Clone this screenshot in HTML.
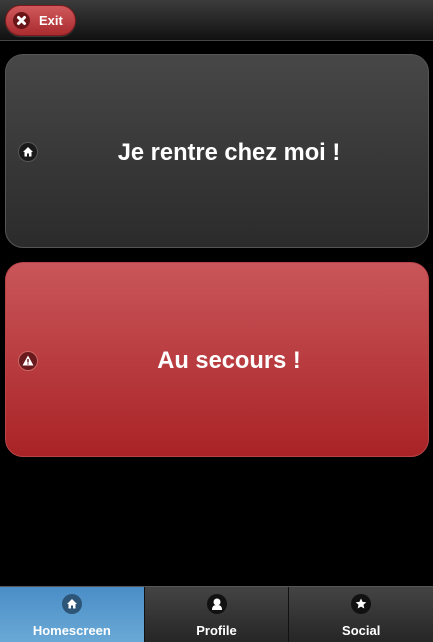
<!DOCTYPE html>
<html><head><meta charset="utf-8"><style>
*{margin:0;padding:0;box-sizing:border-box}
svg{display:block}
body{width:433px;height:642px;background:#000;font-family:"Liberation Sans",Arial,sans-serif;position:relative;overflow:hidden}
.hdr{position:absolute;left:0;top:0;width:433px;height:41px;background:linear-gradient(#3c3c3c,#111);border-bottom:1px solid #454545}
.exit{position:absolute;left:5px;top:5px;width:71px;height:31px;border-radius:16px;background:linear-gradient(#d0585b,#a92c2f);border:1px solid #7a1a1c;color:#fff;font-weight:bold;font-size:13px;line-height:29px;padding-left:33px;box-shadow:0 1px 0 rgba(255,255,255,.15)}
.exit .ic{position:absolute;left:7px;top:6px;width:17px;height:17px;border-radius:50%;background:#6a1518}
.btn{position:absolute;left:5px;width:424px;border-radius:18px;color:#fff;font-weight:bold;font-size:23.7px;text-align:center;padding-left:24px}
.b1{top:54px;height:194px;background:linear-gradient(#474747,#2b2b2b);border:1px solid #555;line-height:196px}
.b2{top:262px;height:195px;background:linear-gradient(#c9565a,#a92326);border:1px solid #b84448;line-height:197px}
.bic{position:absolute;left:12px;top:50%;margin-top:-9px;width:20px;height:20px;border-radius:50%;line-height:0}
.foot{position:absolute;left:0;top:586px;width:433px;height:56px;display:flex;border-top:1px solid #555}
.tab{flex:1;position:relative;color:#fff;font-weight:bold;font-size:13px;text-align:center;background:linear-gradient(#444,#262626);border-left:1px solid #111}
.tab.act{background:linear-gradient(#4a8ec7,#6aa9d6);border-left:none}
.tab span{position:absolute;left:0;right:0;top:36px}
.tic{position:absolute;left:50%;top:7px;margin-left:-10px;width:20px;height:20px;border-radius:50%}
</style></head><body>
<div class="hdr"><div class="exit"><div class="ic"><svg width="17" height="17" viewBox="0 0 17 17"><path d="M5.5 5.5L11.5 11.5M11.5 5.5L5.5 11.5" stroke="#fff" stroke-width="3" stroke-linecap="round"/></svg></div>Exit</div></div>
<div class="btn b1"><div class="bic" style="background:#1a1a1a;border:1px solid #555"><svg width="18" height="18" viewBox="0 0 18 18"><path d="M9 4L4 9h1.5v4.5h2.5v-3h2v3h2.5V9H14z" fill="#fff"/></svg></div>Je rentre chez moi !</div>
<div class="btn b2"><div class="bic" style="background:#6a1a1d;border:1px solid #c66"><svg width="18" height="18" viewBox="0 0 18 18"><path d="M9 3.5L14.5 13.5H3.5z" fill="#fff"/><path d="M9 7v3.5M9 11.5v1" stroke="#6a1a1d" stroke-width="1.5"/></svg></div>Au secours !</div>
<div class="foot">
<div class="tab act"><div class="tic" style="background:#2d5577"><svg width="20" height="20" viewBox="0 0 20 20"><path d="M10 5L5 10h1.5v4.5h2.5v-3h2v3h2.5V10H15z" fill="#fff"/></svg></div><span>Homescreen</span></div>
<div class="tab"><div class="tic" style="background:#111"><svg width="20" height="20" viewBox="0 0 20 20"><circle cx="10" cy="8" r="3.5" fill="#fff"/><path d="M5 16c0-4 2-5 5-5s5 1 5 5z" fill="#fff"/></svg></div><span>Profile</span></div>
<div class="tab"><div class="tic" style="background:#111"><svg width="20" height="20" viewBox="0 0 20 20"><path d="M10 4.5l1.6 3.4 3.7.4-2.8 2.5.8 3.7L10 12.6l-3.3 1.9.8-3.7-2.8-2.5 3.7-.4z" fill="#fff"/></svg></div><span>Social</span></div>
</div>
</body></html>
